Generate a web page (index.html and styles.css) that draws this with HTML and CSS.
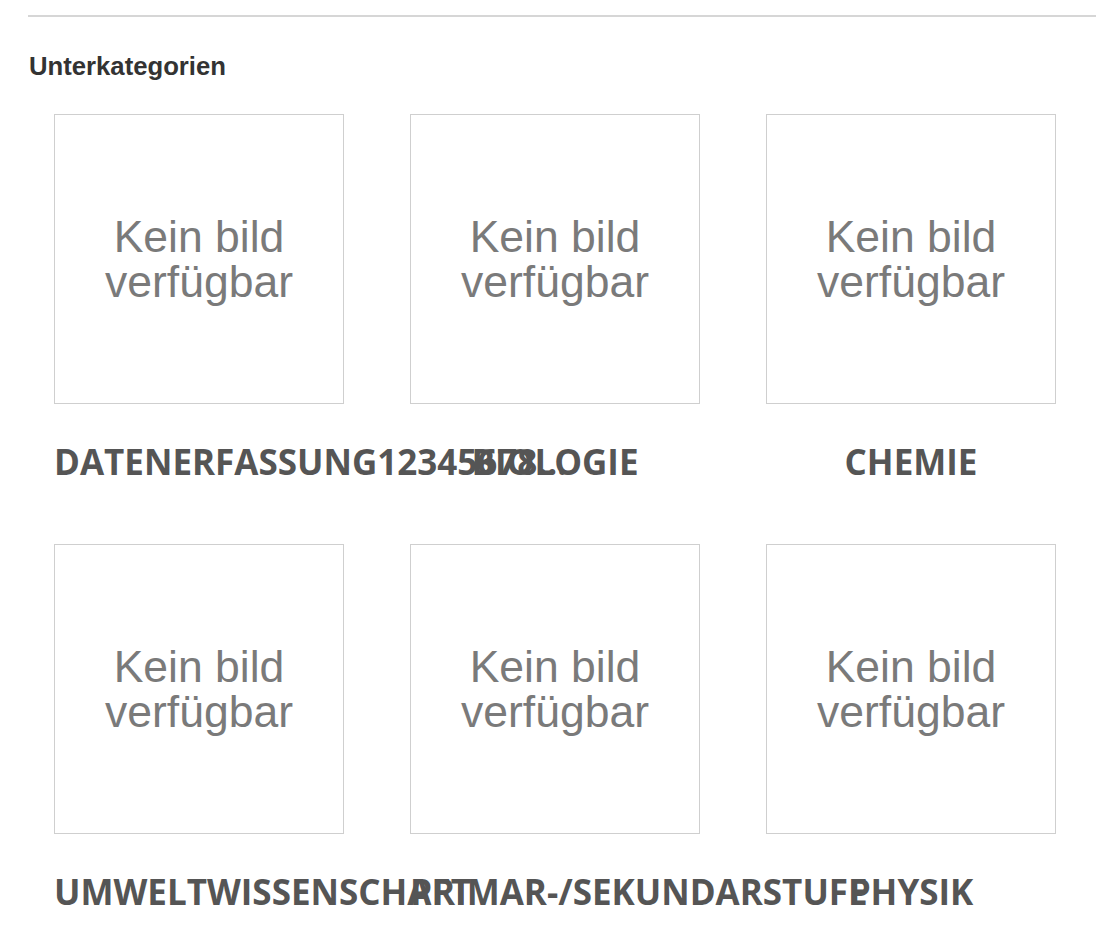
FILE: index.html
```html
<!DOCTYPE html>
<html lang="de">
<head>
<meta charset="utf-8">
<title>Unterkategorien</title>
<link rel="stylesheet" href="styles.css">
</head>
<body>
<div class="page">
  <hr class="rule">
  <h2 class="title">Unterkategorien</h2>
  <div class="grid">
    <div class="card">
      <div class="thumb"><span class="noimg">Kein bild<br>verfügbar</span></div>
      <div class="label">DATENERFASSUNG12345678...</div>
    </div>
    <div class="card">
      <div class="thumb"><span class="noimg">Kein bild<br>verfügbar</span></div>
      <div class="label">BIOLOGIE</div>
    </div>
    <div class="card">
      <div class="thumb"><span class="noimg">Kein bild<br>verfügbar</span></div>
      <div class="label">CHEMIE</div>
    </div>
    <div class="card">
      <div class="thumb"><span class="noimg">Kein bild<br>verfügbar</span></div>
      <div class="label">UMWELTWISSENSCHAFT</div>
    </div>
    <div class="card">
      <div class="thumb"><span class="noimg">Kein bild<br>verfügbar</span></div>
      <div class="label">PRIMAR-/SEKUNDARSTUFE</div>
    </div>
    <div class="card">
      <div class="thumb"><span class="noimg">Kein bild<br>verfügbar</span></div>
      <div class="label">PHYSIK</div>
    </div>
  </div>
</div>
</body>
</html>
```
FILE: styles.css
```css
html, body {
  margin: 0;
  padding: 0;
  background: #ffffff;
}

body {
  font-family: "Liberation Sans", Arial, sans-serif;
  color: #333333;
}

.page {
  padding: 15px 0 0 28px;
}

.rule {
  margin: 0;
  border: 0;
  border-top: 2px solid #d6d6d6;
  height: 0;
}

.title {
  margin: 34px 0 0 1px;
  font-family: "Liberation Sans", Arial, sans-serif;
  font-weight: 700;
  font-size: 25.7px;
  line-height: 30px;
  color: #333333;
}

.grid {
  margin: 33px 0 0 26px;
  display: grid;
  grid-template-columns: repeat(3, 290px);
  column-gap: 66px;
  row-gap: 60px;
}

.card {
  display: flex;
  flex-direction: column;
  width: 290px;
}

.thumb {
  box-sizing: border-box;
  width: 290px;
  height: 290px;
  border: 1px solid #cfcfcf;
  display: flex;
  align-items: center;
  justify-content: center;
  background: #ffffff;
}

.noimg {
  font-family: "Liberation Sans", Arial, sans-serif;
  font-size: 44.5px;
  line-height: 45px;
  color: #7a7a7a;
  text-align: center;
}

.label {
  margin-top: 35px;
  width: 290px;
  text-align: center;
  white-space: nowrap;
  font-family: "Open Sans", "Noto Sans", sans-serif;
  font-weight: 700;
  font-size: 35px;
  line-height: 45px;
  color: #555555;
}
```
